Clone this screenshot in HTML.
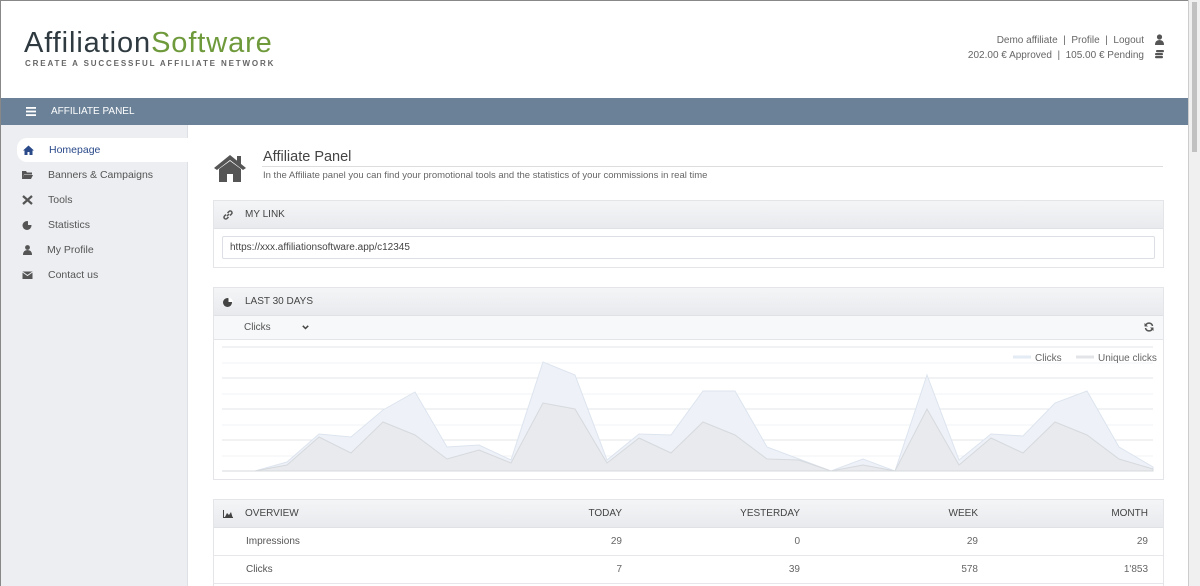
<!DOCTYPE html>
<html><head><meta charset="utf-8"><style>
*{box-sizing:border-box;margin:0;padding:0}
html,body{width:1200px;height:586px;overflow:hidden}
body{background:#fff;font-family:"Liberation Sans",sans-serif;color:#555;position:relative;font-size:10px}
.abs{position:absolute}
#frame{position:absolute;left:0;top:0;width:1188px;height:586px;border-left:1px solid #888;border-top:1px solid #888}
#scroll{position:absolute;left:1188px;top:0;width:12px;height:586px;background:#f0f0f0;border-left:1px solid #ccc}
#scroll div{position:absolute;left:3px;top:2px;width:5px;height:150px;background:#c1c1c1}
.nav{left:1px;top:98px;width:1187px;height:27px;background:#6a8198;color:#fff;font-size:10px}
.side{left:1px;top:125px;width:187px;height:461px;background:#eceef1;border-right:1px solid #dde0e4}
.side .it{position:absolute;left:0;height:24px;width:187px;font-size:10.5px;color:#555;line-height:24px}
.side .it span{position:absolute;left:47px}
.side .ic{position:absolute;left:21px;top:7px;width:11px;height:10px}
.panel{position:absolute;left:213px;width:951px;border:1px solid #e3e5e8;overflow:hidden}
.ph{height:28px;background:linear-gradient(#f4f5f7,#e8eaed);border-bottom:1px solid #dfe2e5;font-size:10px;color:#444;line-height:28px;position:relative}
.ph b{font-weight:normal;position:absolute;left:31px}
.row{position:relative;height:28px;border-bottom:1px solid #e5e7ea;font-size:10px;color:#666;line-height:28px}
</style></head><body>
<div id="frame"></div>
<div id="scroll"><div></div></div>
<div class="abs" style="left:24px;top:27px;font-size:29px;letter-spacing:0.9px;color:#2e3a40">Affiliation<span style="color:#6f9a3c">Software</span></div>
<div class="abs" style="left:25px;top:59px;font-size:8px;letter-spacing:1.85px;color:#666;font-weight:bold">CREATE A SUCCESSFUL AFFILIATE NETWORK</div>
<div class="abs" style="right:56px;top:33px;font-size:10px;color:#666;text-align:right;line-height:15px">Demo affiliate &nbsp;| &nbsp;Profile &nbsp;| &nbsp;Logout<br>202.00 € Approved &nbsp;| &nbsp;105.00 € Pending</div>
<svg class="abs" style="left:1154px;top:34px" width="11" height="26" viewBox="0 0 11 26"><circle cx="5.5" cy="3" r="2.6" fill="#555"/><path d="M1 11 Q1 6 5.5 6 Q10 6 10 11Z" fill="#555"/><rect x="2" y="16" width="8" height="2.2" rx="1" fill="#555"/><rect x="1" y="19" width="8" height="2.2" rx="1" fill="#555"/><rect x="1" y="22" width="8" height="2.2" rx="1" fill="#555"/></svg>
<div class="abs nav"><svg class="abs" style="left:25px;top:9px" width="10" height="9"><rect y="0" width="10" height="1.8" fill="#fff"/><rect y="3.6" width="10" height="1.8" fill="#fff"/><rect y="7.2" width="10" height="1.8" fill="#fff"/></svg><span class="abs" style="left:50px;top:8px">AFFILIATE PANEL</span></div>
<div class="abs side">
 <div class="it" style="top:13px;left:16px;width:171px;background:#fff;border-radius:10px 0 0 10px;color:#2a4a8a"><svg class="ic" style="left:6px" viewBox="0 0 11 10"><path d="M0 5.5L5.5 0.5 11 5.5 9.5 5.5 9.5 10 6.5 10 6.5 7 4.5 7 4.5 10 1.5 10 1.5 5.5Z" fill="#2a4a8a"/></svg><span style="left:32px">Homepage</span></div>
 <div class="it" style="top:38px"><svg class="ic" viewBox="0 0 11 10"><path d="M0 1h4l1 1.5h5v2H2L0 9Z M2 5h9l-2 4H0Z" fill="#555"/></svg><span>Banners &amp; Campaigns</span></div>
 <div class="it" style="top:63px"><svg class="ic" viewBox="0 0 11 10"><path d="M1 1L10 9M10 1L1 9" stroke="#555" stroke-width="2.2"/></svg><span>Tools</span></div>
 <div class="it" style="top:88px"><svg class="ic" viewBox="0 0 11 10"><circle cx="5" cy="5.5" r="4.5" fill="#555"/><path d="M6 0.5A4.5 4.5 0 0 1 10.5 5H6Z" fill="#eceef1"/></svg><span>Statistics</span></div>
 <div class="it" style="top:113px"><svg class="ic" viewBox="0 0 11 10"><circle cx="5.5" cy="2.5" r="2.4" fill="#555"/><path d="M1 10Q1 5 5.5 5Q10 5 10 10Z" fill="#555"/></svg><span style="left:46px">My Profile</span></div>
 <div class="it" style="top:138px"><svg class="ic" viewBox="0 0 11 10"><rect x="0.5" y="1.5" width="10" height="7.5" fill="#555"/><path d="M0.5 2L5.5 5.5 10.5 2" stroke="#eceef1" fill="none"/></svg><span>Contact us</span></div>
</div>
<svg class="abs" style="left:213px;top:154px" width="34" height="28" viewBox="0 0 34 28"><path d="M1 14L17 1 33 14 30 16 17 6 4 16Z" fill="#555"/><rect x="24" y="2" width="4" height="8" fill="#555"/><path d="M6 15L17 7 28 15V28H20V20H14V28H6Z" fill="#555"/></svg>
<div class="abs" style="left:263px;top:149px;font-size:14.5px;color:#444">Affiliate Panel</div>
<div class="abs" style="left:262px;top:166px;width:901px;border-top:1px solid #ddd"></div>
<div class="abs" style="left:263px;top:170px;font-size:9.5px;color:#666">In the Affiliate panel you can find your promotional tools and the statistics of your commissions in real time</div>
<div class="panel" style="top:200px;height:68px"><div class="ph"><svg class="abs" style="left:9px;top:9px" width="10" height="10"><path d="M4 6L6 4M3 4.5L1.5 6a1.6 1.6 0 0 0 2.5 2.5L5.5 7M7 5.5L8.5 4A1.6 1.6 0 0 0 6 1.5L4.5 3" stroke="#555" stroke-width="1.5" fill="none"/></svg><b>MY LINK</b></div>
<div class="abs" style="left:8px;top:35px;width:933px;height:23px;border:1px solid #dcdfe3;border-radius:2px;font-size:10px;color:#444;line-height:21px;padding-left:7px">https://xxx.affiliationsoftware.app/c12345</div></div>
<div class="panel" style="top:287px;height:193px"><div class="ph"><svg class="abs" style="left:9px;top:9px" width="10" height="10"><circle cx="4.5" cy="5.5" r="4.5" fill="#444"/><path d="M5.5 0.5A4.5 4.5 0 0 1 10 5H5.5Z" fill="#fff"/></svg><b>LAST 30 DAYS</b></div>
<div style="height:24px;background:#f7f8f9;border-bottom:1px solid #e3e5e8;position:relative;font-size:10px"><span class="abs" style="left:30px;top:6px;color:#555">Clicks</span><svg class="abs" style="left:88px;top:9px" width="7" height="5"><path d="M0.8 0.8L3.5 3.5 6.2 0.8" stroke="#444" stroke-width="1.5" fill="none"/></svg><svg class="abs" style="right:9px;top:6px" width="10" height="10" viewBox="0 0 10 10"><path d="M8.5 4A3.6 3.6 0 0 0 1.8 3M1.5 6A3.6 3.6 0 0 0 8.2 7" stroke="#555" stroke-width="1.5" fill="none"/><path d="M0.5 1V4.5H4Z M9.5 9V5.5H6Z" fill="#555"/></svg></div></div>
<svg class="abs" style="left:213px;top:340px" width="951" height="135" viewBox="213 340 951 135">
<g stroke-width="1"><line x1="222" x2="1153" y1="347" y2="347" stroke="#e2e6ea"/><line x1="222" x2="1153" y1="363" y2="363" stroke="#f1f3f5"/><line x1="222" x2="1153" y1="378" y2="378" stroke="#e2e6ea"/><line x1="222" x2="1153" y1="394" y2="394" stroke="#f1f3f5"/><line x1="222" x2="1153" y1="409" y2="409" stroke="#e2e6ea"/><line x1="222" x2="1153" y1="425" y2="425" stroke="#f1f3f5"/><line x1="222" x2="1153" y1="440" y2="440" stroke="#e2e6ea"/><line x1="222" x2="1153" y1="456" y2="456" stroke="#f1f3f5"/><line x1="222" x2="1153" y1="471" y2="471" stroke="#dcdfe3"/></g>
<path d="M223 471L255 471 287 462 319 434 351 437 383 410 415 392 447 447 479 445 511 460 543 362 575 375 607 460 639 434 671 435 703 391 735 391 767 447 799 459 831 471 863 459 895 471 927 375 959 460 991 434 1023 436 1055 403 1087 391 1119 447 1153 467 1153 471Z" fill="#eef2f8" stroke="#dde4ee"/>
<path d="M223 471L255 471 287 465 319 437 351 453 383 422 415 435 447 459 479 450 511 463 543 403 575 409 607 463 639 438 671 453 703 422 735 435 767 459 799 460 831 471 863 465 895 471 927 409 959 465 991 438 1023 453 1055 422 1087 435 1119 459 1153 469 1153 471Z" fill="#e8eaed" stroke="#d6d9dd"/>
<line x1="1013" x2="1031" y1="357" y2="357" stroke="#e3ebf5" stroke-width="3"/><text x="1035" y="361" font-size="10" fill="#666" font-family="Liberation Sans">Clicks</text>
<line x1="1076" x2="1094" y1="357" y2="357" stroke="#e2e4e7" stroke-width="3"/><text x="1098" y="361" font-size="10" fill="#666" font-family="Liberation Sans">Unique clicks</text>
</svg>
<div class="panel" style="top:499px;height:100px;border-bottom:none"><div class="ph"><svg class="abs" style="left:9px;top:10px" width="10" height="8"><path d="M0.5 0V7.5H10" stroke="#444" fill="none"/><path d="M2 7L4 3 6 5 8 2 9.5 7Z" fill="#444"/></svg><b>OVERVIEW</b><span class="abs" style="right:541px">TODAY</span><span class="abs" style="right:363px">YESTERDAY</span><span class="abs" style="right:185px">WEEK</span><span class="abs" style="right:15px">MONTH</span></div>
<div class="row"><span class="abs" style="left:32px;color:#555">Impressions</span><span class="abs" style="right:541px">29</span><span class="abs" style="right:363px">0</span><span class="abs" style="right:185px">29</span><span class="abs" style="right:15px">29</span></div>
<div class="row"><span class="abs" style="left:32px;color:#555">Clicks</span><span class="abs" style="right:541px">7</span><span class="abs" style="right:363px">39</span><span class="abs" style="right:185px">578</span><span class="abs" style="right:15px">1'853</span></div>
</div>
</body></html>
